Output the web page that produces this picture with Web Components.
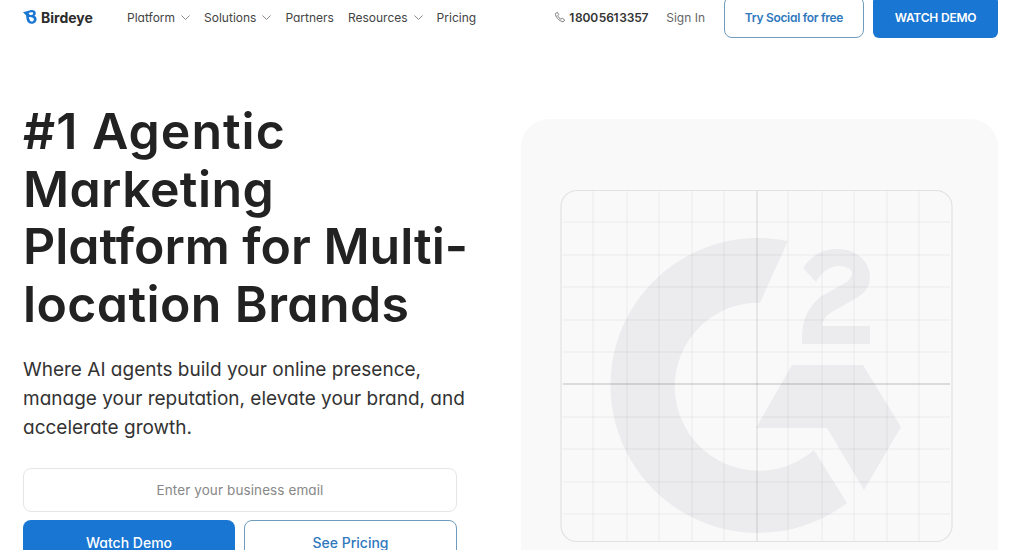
<!DOCTYPE html>
<html lang="en">
<head>
<meta charset="utf-8">
<title>Birdeye</title>
<style>
	html, body { margin: 0; height: 550px; overflow: hidden; background: #fff; }
	body { font-family: Inter, "Liberation Sans", sans-serif; font-feature-settings: 'cv11' 1; color: #222; }
	hero-section span[slot="title"] span { display: block; }
</style>
</head>
<body>
<site-header>
	<nav-item caret>Platform</nav-item>
	<nav-item caret>Solutions</nav-item>
	<nav-item>Partners</nav-item>
	<nav-item caret>Resources</nav-item>
	<nav-item>Pricing</nav-item>
</site-header>
<hero-section>
	<span slot="title">
		<span style="letter-spacing:1px">#1 Agentic</span>
		<span style="letter-spacing:.4px">Marketing</span>
		<span>Platform for Multi-</span>
		<span style="letter-spacing:.4px">location Brands</span>
	</span>
	<span slot="lead">Where AI agents build your online presence, manage your reputation, elevate your brand, and accelerate growth.</span>
	<email-form slot="form"></email-form>
	<g2-panel slot="visual"></g2-panel>
</hero-section>
<script>
class CtaButton extends HTMLElement {
	constructor() {
		super();
		this.attachShadow({ mode: 'open' });
		this.shadowRoot.innerHTML = `
            <style>
                :host {
                    display: flex;
                    align-items: center;
                    justify-content: center;
                    box-sizing: border-box;
                    height: 42px;
                    border-radius: 8px;
                    font-size: 12px;
                    font-weight: 600;
                    letter-spacing: -.2px;
                    white-space: nowrap;
                    cursor: pointer;
                    background: #1976d2;
                    color: #fff;
                }
                :host([outline]) {
                    background: #fff;
                    color: #2f78bd;
                    border: 1px solid #6f9cbd;
                }
            </style>
            <slot></slot>
    `;
	}
}
customElements.define('cta-button', CtaButton);

class NavItem extends HTMLElement {
	constructor() {
		super();
		this.attachShadow({ mode: 'open' });
		this.shadowRoot.innerHTML = `
            <style>
                :host {
                    display: inline-flex;
                    align-items: center;
                    gap: 6px;
                    font-size: 12px;
                    color: #444;
                    cursor: pointer;
                    white-space: nowrap;
                }
                svg { display: none; width: 9px; height: 5px; }
                :host([caret]) svg { display: block; }
            </style>
            <slot></slot>
            <svg viewBox="0 0 9 5"><path d="M.5.5l4 4 4-4" fill="none" stroke="#888" stroke-width="1"/></svg>
    `;
	}
}
customElements.define('nav-item', NavItem);

class SiteHeader extends HTMLElement {
	constructor() {
		super();
		this.attachShadow({ mode: 'open' });
		this.shadowRoot.innerHTML = `
            <style>
                :host {
                    display: flex;
                    align-items: center;
                    height: 54px;
                    margin-top: -10px;
                    padding: 0 26px 0 23px;
                }
                .logo {
                    display: flex;
                    align-items: center;
                    gap: 4px;
                    width: 104px;
                    font-size: 14px;
                    font-weight: 700;
                    color: #2b2b2b;
                }
                .logo svg { width: 14px; height: 14px; }
                nav { display: flex; align-items: center; gap: 14px; }
                .right { display: flex; align-items: center; margin-left: auto; }
                .phone {
                    display: flex;
                    align-items: center;
                    gap: 3px;
                    font-size: 12px;
                    font-weight: 600;
                    letter-spacing: -.2px;
                    word-spacing: -2px;
                    color: #333;
                    margin-right: 18px;
                }
                .phone svg { width: 12px; height: 12px; }
                .sign { font-size: 12px; color: #666; margin-right: 19px; }
                .try { width: 140px; margin-right: 9px; letter-spacing: -.3px; }
                .demo { width: 125px; border-radius: 6px; }
            </style>
            <div class="logo">
                <svg viewBox="0 0 14 14"><path d="M0 2.200 6.500.4C9.800-.5 12.800.6 12.800 3.200c0 1.100-.6 2-1.500 2.500 1.400.6 2.300 1.800 2.300 3.300 0 2.900-2.300 4.800-5 4.800-2.400 0-4.200-1.500-4.900-3.800L3 5.300 0 2.200Zm5.500.8 1.400 1.900c1.500.1 3.300-.3 3.300-1.500 0-1-1.100-1.400-2.200-1.100L5.500 3Zm.3 4 .8 2.700c.4 1.100 1.100 1.800 2.100 1.800 1.200 0 2.200-.9 2.200-2.100C10.900 7.800 9 6.800 5.800 7Z" fill="#1976d2"/></svg>
                <span>Birdeye</span>
            </div>
            <nav><slot></slot></nav>
            <div class="right">
                <div class="phone">
                    <svg viewBox="0 0 24 24"><path d="M6.500 2.500 3 5c-.8 6 7.500 16 15.500 16.500l3-3.500-5-3.500-2.500 2C11 15 8.500 12 7.500 9.500l2-2.500-3-4.500Z" fill="none" stroke="#666" stroke-width="1.700" stroke-linejoin="round"/></svg>
                    <span>1 800 561 3357</span>
                </div>
                <span class="sign">Sign In</span>
                <cta-button class="try" outline>Try Social for free</cta-button>
                <cta-button class="demo">WATCH DEMO</cta-button>
            </div>
    `;
	}
}
customElements.define('site-header', SiteHeader);

class EmailForm extends HTMLElement {
	constructor() {
		super();
		this.attachShadow({ mode: 'open' });
		this.shadowRoot.innerHTML = `
            <style>
                :host { display: grid; grid-template-columns: 212px 213px; column-gap: 9px; row-gap: 8px; }
                .field {
                    grid-column: 1 / -1;
                    box-sizing: border-box;
                    height: 44px;
                    display: flex;
                    align-items: center;
                    justify-content: center;
                    border: 1px solid #e6e6e6;
                    border-radius: 8px;
                    font-size: 13.5px;
                    letter-spacing: .1px;
                    color: #888;
                }
                cta-button { font-size: 14px; font-weight: 500; height: 46px; letter-spacing: 0; }
            </style>
            <div class="field">Enter your business email</div>
            <cta-button>Watch Demo</cta-button>
            <cta-button outline>See Pricing</cta-button>
    `;
	}
}
customElements.define('email-form', EmailForm);

class G2Panel extends HTMLElement {
	constructor() {
		super();
		this.attachShadow({ mode: 'open' });
		const xs = [593, 627, 659, 692, 724, 788, 822, 854, 887, 919];
		const ys = [222, 255, 287, 320, 352, 417, 449, 482, 514];
		const lines = xs.map(x => `<path d="M${x} 190V542"/>`).join('') + ys.map(y => `<path d="M563 ${y}H950"/>`).join('');
		this.shadowRoot.innerHTML = `
            <style>
                :host {
                    display: block;
                    box-sizing: border-box;
                    height: 470px;
                    padding: 71px 0 0 40px;
                    background: #f9f9fa;
                    border-radius: 28px;
                }
                svg { display: block; width: 391px; height: 352px; overflow: visible; }
            </style>
            <svg viewBox="561 190 391 352">
                <g fill="#ececee">
                    <path d="M788 241A147.500 147.500 0 1 0 847 503L814 450A84 84 0 1 1 760 302.700Z"/>
                    <path d="M792 365H863L901 427 864 490 827 428H756Z"/>
                    <path d="M803 268C811 256 822 249 837 249 856 249 870 261 870 277 870 288 863 295 853 300L830 313C825 317 823 320 822 326H870V344H802V337C802 320 808 308 820 297L847 282C850 279 852 276 852 273 852 269 846 266 838 266 831 266 822 271 816 282Z"/>
                </g>
                <g stroke="#000" stroke-opacity=".055" fill="none">${lines}</g>
                <path d="M757 190V542" stroke="#000" stroke-opacity=".14"/>
                <path d="M563 384H950" stroke="#000" stroke-opacity=".24"/>
                <rect x="561" y="190.500" width="391" height="351" rx="16" fill="none" stroke="#e2e2e2" stroke-width="1.200"/>
            </svg>
    `;
	}
}
customElements.define('g2-panel', G2Panel);

class HeroSection extends HTMLElement {
	constructor() {
		super();
		this.attachShadow({ mode: 'open' });
		this.shadowRoot.innerHTML = `
            <style>
                :host {
                    display: grid;
                    grid-template-columns: 434px 477px;
                    column-gap: 64px;
                    padding: 59px 26px 0 23px;
                }
                h1 {
                    margin: 0;
                    font-size: 50px;
                    font-weight: 560;
                    line-height: 57.6px;
                    color: #222;
                    white-space: nowrap;
                }
                p {
                    margin: 23px 0 25px;
                    font-size: 19px;
                    line-height: 28.8px;
                    color: #333;
                    width: 455px;
                }
                .visual { padding-top: 16px; }
            </style>
            <div>
                <h1><slot name="title"></slot></h1>
                <p><slot name="lead"></slot></p>
                <slot name="form"></slot>
            </div>
            <div class="visual"><slot name="visual"></slot></div>
    `;
	}
}
customElements.define('hero-section', HeroSection);
</script>
</body>
</html>
